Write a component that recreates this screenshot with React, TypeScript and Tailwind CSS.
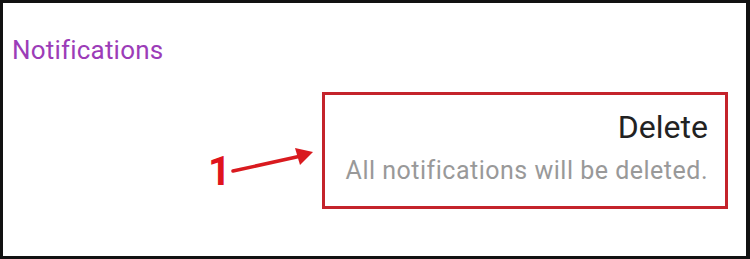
export default function App() {
  return (
    <div
      className="w-[750px] h-[259px] bg-white border-[3px] border-[#111] border-r-4 flex flex-col"
      style={{ fontFamily: "Roboto, 'Liberation Sans', sans-serif" }}
    >
      <div className="pl-[9px] pt-[30px] h-[89px]">
        <span className="text-[26px] leading-[34px] tracking-[0.2px] text-[#9c3cb8]">Notifications</span>
      </div>
      <div className="flex justify-end items-center pr-[18px]">
        <div className="flex items-center mt-[36px] mr-[7px]">
          <span className="text-[40px] leading-none font-bold text-[#e0141c] mt-[6px]">1</span>
          <svg width="84" height="28" viewBox="0 0 84 28" className="-mt-[14px]">
            <line x1="2" y1="23" x2="70" y2="8" stroke="#d91a1f" strokeWidth="3.5" strokeLinecap="round" />
            <polygon points="82,4 64,0 69,17" fill="#d91a1f" />
          </svg>
        </div>
        <div className="w-[406px] h-[117px] border-[3px] border-[#c4232b] flex flex-col items-end pr-[17px] pt-[12px]">
          <span className="text-[32px] leading-[40px] text-[#222]">Delete</span>
          <span className="text-[25px] leading-[32px] tracking-[0.5px] text-[#999] mt-[8px]">
            All notifications will be deleted.
          </span>
        </div>
      </div>
    </div>
  );
}
